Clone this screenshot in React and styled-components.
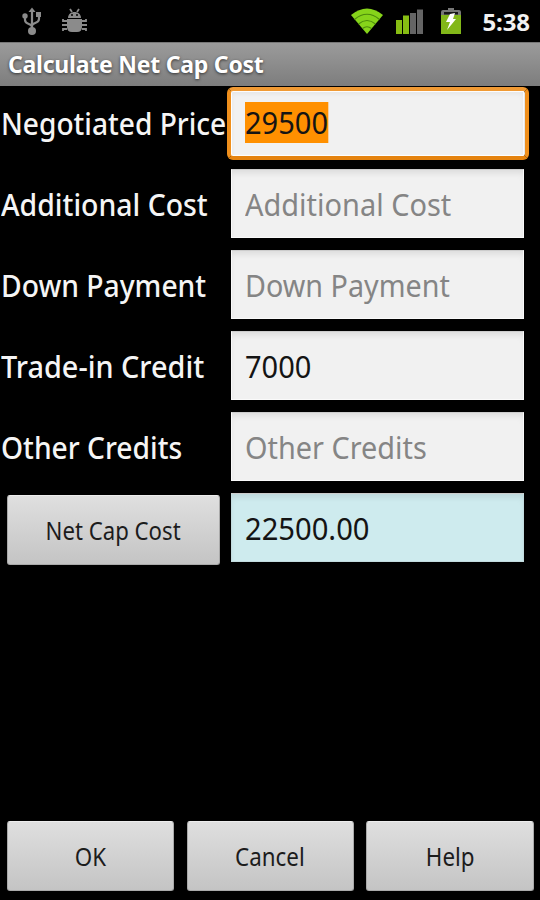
import React from "react";
import styled, { createGlobalStyle, css } from "styled-components";

const GlobalStyle = createGlobalStyle`
  * {
    box-sizing: border-box;
  }

  body {
    margin: 0;
    background: #000;
    font-family: "Noto Sans", "Open Sans", sans-serif;
  }
`;

const Screen = styled.div`
  display: flex;
  flex-direction: column;
  width: 540px;
  height: 900px;
  background: #000;
  overflow: hidden;
`;

const StatusBar = styled.header`
  display: flex;
  align-items: center;
  justify-content: space-between;
  height: 42px;
  padding: 0 10px 0 20px;
`;

const IconGroup = styled.div`
  display: flex;
  align-items: center;
  gap: ${(props) => props.$gap}px;

  svg {
    display: block;
  }
`;

const Clock = styled.span`
  margin-left: 3px;
  color: #f2f2f2;
  font-size: 24px;
  font-weight: 700;
  line-height: 42px;
  letter-spacing: -0.1px;
  padding-top: 1px;
`;

const TitleBar = styled.div`
  height: 44px;
  padding-left: 8px;
  border-top: 1px solid #777;
  background: linear-gradient(#9b9b9b, #7d7d7d);
  color: #fff;
  font-size: 23px;
  font-weight: 700;
  line-height: 42px;
  letter-spacing: -0.23px;
  text-shadow: 0 1px 3px #333;
  white-space: nowrap;
`;

const Form = styled.main`
  display: flex;
  flex: 1;
  flex-direction: column;
  gap: 12px;
  padding: 2px 16px 0 0;
`;

const Row = styled.div`
  display: grid;
  grid-template-columns: 231px 293px;
  grid-template-rows: 69px;
  height: 69px;
`;

// Condenses the glyphs to the narrower widths of the device font
const Condensed = styled.span`
  display: inline-block;
  transform: scaleX(${(props) => props.$scale});
  transform-origin: ${(props) => props.$origin || "left"} center;
`;

const Label = styled.label`
  padding-left: 1px;
  color: #f5f5f5;
  font-size: 31px;
  font-weight: 500;
  line-height: 70px;
  white-space: nowrap;
`;

const focusRing = css`
  &::after {
    content: "";
    position: absolute;
    inset: -2px -6px -4px -5px;
    border: 4px solid #ef8f1c;
    border-top-color: #f09a34;
    border-bottom-color: #e5830f;
    border-radius: 6px;
    box-shadow: inset 0 0 1px 1px #fff;
  }
`;

const Field = styled.div`
  position: relative;
  height: 69px;
  padding-left: 13px;
  border: 1px solid ${(props) => (props.$result ? "#c3dcdf" : "#fafafa")};
  border-top-color: #ccc;
  background: ${(props) => (props.$result ? "#ceebee" : "#f1f1f1")};
  box-shadow: inset 0 5px 6px -2px rgba(0, 0, 0, 0.09);
  color: ${(props) => (props.$hint ? "#858585" : "#141414")};
  font-size: 31px;
  line-height: 68px;
  white-space: nowrap;

  ${(props) => props.$focused && focusRing}
`;

const Selection = styled(Condensed)`
  height: 41px;
  margin-top: 13px;
  background: #ff9000;
  line-height: 41px;
  vertical-align: top;
`;

const Button = styled.button`
  height: 70px;
  padding: 0;
  border: 1px solid #a9a9a9;
  border-top-color: #ededed;
  border-radius: 3px;
  background: linear-gradient(#dfdfdf, #c4c4c4);
  color: #1c1c1c;
  font-family: inherit;
  font-size: 25px;
  line-height: 68px;
  white-space: nowrap;
`;

const CalculateButton = styled(Button)`
  margin: 2px 11px 0 7px;
`;

const Footer = styled.footer`
  display: grid;
  grid-template-columns: 167px 167px 168px;
  gap: 12.5px;
  padding: 0 6px 9px 7px;
`;

const UsbIcon = () => (
  <svg width="24" height="30" viewBox="0 0 24 30" fill="none" stroke="#8b8b8b" strokeWidth="2.2">
    <path d="M12 4v20M5 11v3c0 5 7 3 7 7M19 9v4c0 5-7 3-7 7" />
    <path d="M8.5 6 12 1.5 15.5 6z" fill="#8b8b8b" stroke="none" />
    <circle cx="5" cy="10" r="2.7" fill="#8b8b8b" stroke="none" />
    <path d="M16 6h5v5h-5z" fill="#8b8b8b" stroke="none" />
    <circle cx="12" cy="25" r="4" fill="#8b8b8b" stroke="none" />
  </svg>
);

const DebugIcon = () => (
  <svg width="26" height="26" viewBox="0 0 26 26" fill="#8b8b8b">
    <path d="M6 10c0-8 13-8 13 0z" />
    <path d="M5 11h15v8q0 5-5 5h-5q-5 0-5-5z" />
    <path
      d="m8 1 2 3M17 1l-2 3M5 13H1v-2M5 17H0M5 21H1v2M20 13h4v-2M20 17h5M20 21h4v2"
      fill="none"
      stroke="#8b8b8b"
      strokeWidth="1.8"
    />
    <circle cx="10" cy="7" r="1" fill="#000" />
    <circle cx="15" cy="7" r="1" fill="#000" />
  </svg>
);

const WifiIcon = () => (
  <svg width="34" height="28" viewBox="0 0 34 28">
    <path d="M1 8Q17-5 33 8L17 27z" fill="#86d41a" />
    <path
      d="M4.5 12.5Q17 2 29.5 12.5M8.5 17Q17 10 25.5 17M12.5 21.5Q17 18 21.5 21.5"
      fill="none"
      stroke="#4b8a0c"
      strokeWidth="1.2"
    />
  </svg>
);

const SignalIcon = () => (
  <svg width="27" height="26" viewBox="0 0 27 26">
    <path d="M0 12h6v14H0zM7 7.5h6V26H7z" fill="#87bd13" />
    <path d="M14 5h6v21h-6zM21 1.5h6V26h-6z" fill="#656565" />
  </svg>
);

const BatteryIcon = () => (
  <svg width="20" height="28" viewBox="0 0 20 28">
    <path d="M7 1h6v2h5q2 0 2 2v4H0V5q0-2 2-2h5z" fill="#777" />
    <path d="M3 5h14v2.5H3z" fill="#171717" />
    <path d="M0 8h20v19H0z" fill="#82b719" />
    <path d="m9 7 5-1-2 6h3L6 23l3-8H5z" fill="#fff" />
  </svg>
);

const rows = [
  { label: "Negotiated Price", labelScale: 0.907, value: "29500", scale: 0.936, focused: true },
  { label: "Additional Cost", labelScale: 0.917, value: "Additional Cost", scale: 0.934, hint: true },
  { label: "Down Payment", labelScale: 0.912, value: "Down Payment", scale: 0.926, hint: true },
  { label: "Trade-in Credit", labelScale: 0.931, value: "7000", scale: 0.936 },
  { label: "Other Credits", labelScale: 0.91, value: "Other Credits", scale: 0.931, hint: true },
];

const actions = ["OK", "Cancel", "Help"];

const App = () => {
  return (
    <>
      <GlobalStyle />
      <Screen>
        <StatusBar>
          <IconGroup $gap={18}>
            <UsbIcon />
            <DebugIcon />
          </IconGroup>
          <IconGroup $gap={18}>
            <IconGroup $gap={12}>
              <WifiIcon />
              <SignalIcon />
            </IconGroup>
            <BatteryIcon />
            <Clock>5:38</Clock>
          </IconGroup>
        </StatusBar>
        <TitleBar>Calculate Net Cap Cost</TitleBar>
        <Form>
          {rows.map((row) => (
            <Row key={row.label}>
              <Label>
                <Condensed $scale={row.labelScale}>{row.label}</Condensed>
              </Label>
              <Field $hint={row.hint} $focused={row.focused}>
                {row.focused ? (
                  <Selection $scale={row.scale}>{row.value}</Selection>
                ) : (
                  <Condensed $scale={row.scale}>{row.value}</Condensed>
                )}
              </Field>
            </Row>
          ))}
          <Row>
            <CalculateButton>
              <Condensed $scale={0.887} $origin="center">
                Net Cap Cost
              </Condensed>
            </CalculateButton>
            <Field $result>
              <Condensed $scale={0.94}>22500.00</Condensed>
            </Field>
          </Row>
        </Form>
        <Footer>
          {actions.map((action) => (
            <Button key={action}>
              <Condensed $scale={0.895} $origin="center">
                {action}
              </Condensed>
            </Button>
          ))}
        </Footer>
      </Screen>
    </>
  );
};

export default App;
